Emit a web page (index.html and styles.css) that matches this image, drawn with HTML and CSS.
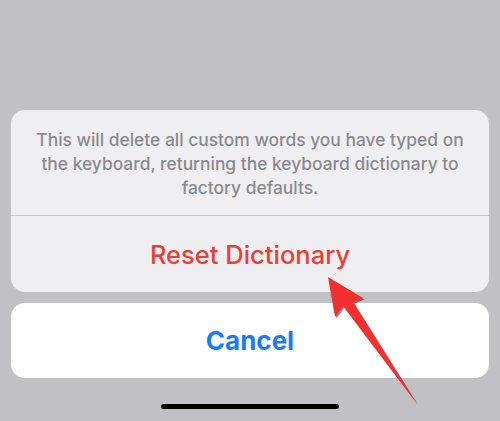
FILE: index.html
```html
<!DOCTYPE html>
<html>
<head>
<meta charset="utf-8">
<link rel="stylesheet" href="styles.css">
</head>
<body>
<div class="screen">
  <div class="sheet">
    <div class="group">
      <p class="message">This will delete all custom words you have typed on the keyboard, returning the keyboard dictionary to factory defaults.</p>
      <div class="action destructive">Reset Dictionary</div>
    </div>
    <div class="cancel">Cancel</div>
  </div>
  <div class="home-bar"></div>
  <svg class="arrow" width="500" height="421" viewBox="0 0 500 421">
    <polygon points="328,277 363,298 353,302 417,404 343,306 335,317" fill="#5a1010" opacity="0.55" transform="translate(1.5,1.5)"/>
    <polygon points="328,277 363,298 353,302 417,404 343,306 335,317" fill="#f2302f"/>
  </svg>
</div>
</body>
</html>
```

FILE: styles.css
```css
* { box-sizing: border-box; }
html, body { margin: 0; padding: 0; }
body {
  background: #c1c0c5;
  font-family: Inter, "Noto Sans", "Liberation Sans", sans-serif;
  width: 500px;
  height: 421px;
  overflow: hidden;
}
.screen {
  position: relative;
  width: 500px;
  height: 421px;
  padding: 110px 11px 0;
  display: flex;
  flex-direction: column;
}
.sheet {
  display: flex;
  flex-direction: column;
  gap: 11px;
}
.group {
  background: #efeff1;
  border-radius: 14px;
  display: flex;
  flex-direction: column;
}
.message {
  margin: 0;
  padding: 18px 14px 0;
  height: 106px;
  border-bottom: 1px solid #c8c8cb;
  text-align: center;
  color: #8a8a8e;
  font-size: 17.4px;
  line-height: 24px;
  font-weight: 500;
}
.action {
  height: 76px;
  display: flex;
  align-items: center;
  justify-content: center;
  font-size: 25.5px;
  font-weight: 500;
}
.destructive { color: #ee3d35; }
.cancel {
  background: #ffffff;
  border-radius: 14px;
  height: 75px;
  display: flex;
  align-items: center;
  justify-content: center;
  color: #1a7cf4;
  font-size: 26px;
  font-weight: 700;
}
.home-bar {
  width: 178px;
  height: 5px;
  border-radius: 3px;
  background: #000;
  margin: 26px auto 0;
}
.arrow {
  position: absolute;
  left: 0;
  top: 0;
}
```
